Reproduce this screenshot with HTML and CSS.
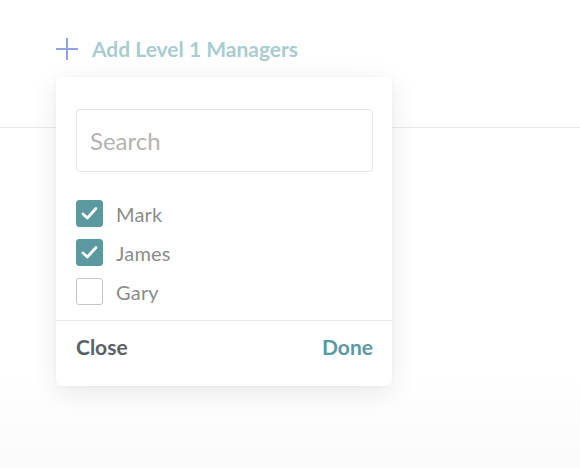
FILE: index.html
```html
<!DOCTYPE html>
<html>
<head>
<meta charset="utf-8">
<link rel="stylesheet" href="styles.css">
</head>
<body>
<div class="page">
  <div class="toolbar">
    <button class="add-btn">
      <svg class="plus" width="22" height="22" viewBox="0 0 22 22"><path d="M11 0V22M0 11H22" stroke="#8fa4e0" stroke-width="2" fill="none"/></svg>
      <span class="add-label">Add Level 1 Managers</span>
    </button>
  </div>
  <div class="rule"></div>

  <div class="dropdown">
    <div class="dropdown-body">
      <div class="search">Search</div>
      <ul class="options">
        <li class="option"><span class="box checked"><svg width="19" height="19" viewBox="0 0 19 19"><path d="M3 10L7.3 14L16 4.5" stroke="#fff" stroke-width="2.8" fill="none" stroke-linecap="round" stroke-linejoin="round"/></svg></span><span class="name">Mark</span></li>
        <li class="option"><span class="box checked"><svg width="19" height="19" viewBox="0 0 19 19"><path d="M3 10L7.3 14L16 4.5" stroke="#fff" stroke-width="2.8" fill="none" stroke-linecap="round" stroke-linejoin="round"/></svg></span><span class="name">James</span></li>
        <li class="option"><span class="box"></span><span class="name">Gary</span></li>
      </ul>
    </div>
    <div class="dropdown-footer">
      <span class="close">Close</span>
      <span class="done">Done</span>
    </div>
  </div>
</div>
</body>
</html>
```
FILE: styles.css
```css
* { box-sizing: border-box; }
html, body { margin: 0; padding: 0; }
body {
  background: #fff;
  font-family: "Lato", "Open Sans", sans-serif;
  width: 580px;
  height: 468px;
  overflow: hidden;
}
.page {
  position: relative;
  height: 468px;
  background: linear-gradient(to bottom, #ffffff 0%, #ffffff 80%, #fafafa 100%);
}
.toolbar {
  padding: 38px 0 0 56px;
  height: 127px;
}
.add-btn {
  display: flex;
  align-items: center;
  gap: 14px;
  background: none;
  border: 0;
  padding: 0;
  font: inherit;
  cursor: pointer;
}
.plus { display: block; }
.add-label {
  font-size: 21px;
  font-weight: 700;
  color: #a9ccd0;
  line-height: 22px;
}
.rule {
  height: 1px;
  background: #e8e8e8;
}
.dropdown {
  position: absolute;
  left: 56px;
  top: 77px;
  width: 336px;
  height: 309px;
  background: #fff;
  border-radius: 6px;
  box-shadow: 0 6px 28px rgba(0, 0, 0, 0.09), 0 1px 4px rgba(0,0,0,0.03);
  display: flex;
  flex-direction: column;
}
.dropdown-body {
  padding: 32px 19px 0 20px;
  height: 244px;
  border-bottom: 1px solid #e8e8e8;
}
.search {
  height: 63px;
  border: 1px solid #e4e4e4;
  border-radius: 4px;
  padding: 0 13px;
  display: flex;
  align-items: center;
  font-size: 24px;
  color: #b3b3b3;
}
.options {
  list-style: none;
  margin: 28px 0 0 0;
  padding: 0;
  display: flex;
  flex-direction: column;
  gap: 12px;
}
.option {
  display: flex;
  align-items: center;
  gap: 13px;
  height: 27px;
}
.box {
  width: 27px;
  height: 27px;
  border: 1px solid #c4c4c4;
  border-radius: 3px;
  display: flex;
  align-items: center;
  justify-content: center;
  background: #fff;
}
.box.checked {
  background: #5b99a1;
  border-color: #5b99a1;
}
.box svg { display: block; }
.name {
  font-size: 20px;
  color: #8c8c8c;
  letter-spacing: 0.2px;
}
.dropdown-footer {
  display: flex;
  justify-content: space-between;
  align-items: flex-start;
  padding: 14px 19px 0 20px;
  font-size: 21px;
  line-height: 24px;
  font-weight: 700;
}
.close { color: #5b6068; }
.done { color: #5b99a1; }
```
